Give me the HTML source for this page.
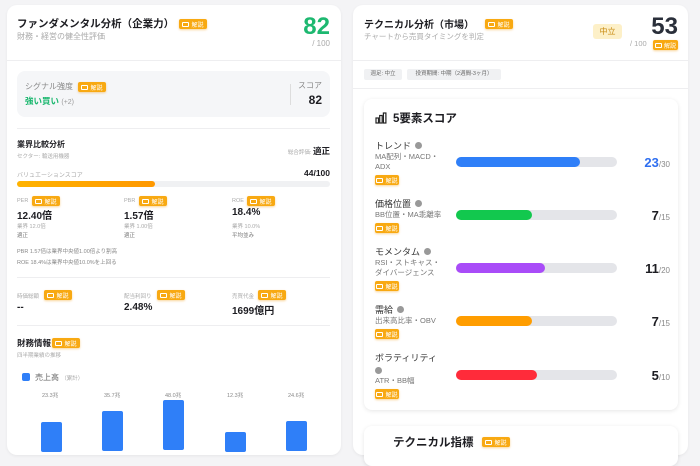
<!DOCTYPE html><html><head><meta charset="utf-8"><style>
*{margin:0;padding:0;box-sizing:border-box}
body{width:700px;height:441px;overflow:hidden;background:#f4f4f6;font-family:"Liberation Sans","Noto Sans CJK JP",sans-serif;color:#1d1d22;position:relative}
.a{position:absolute;white-space:nowrap}
.card{position:absolute;background:#fff;border-radius:10px;box-shadow:0 1px 3px rgba(0,0,0,.06)}
.b{position:absolute;background:#f8a912;color:#fff;font-size:6px;border-radius:2px;height:10px;width:28px;display:flex;align-items:center;justify-content:center;white-space:nowrap;box-shadow:0 1px 2px rgba(240,150,0,.4)}
.b:before{content:"";display:block;width:5px;height:3px;border:1px solid #fff;border-radius:1px;margin-right:2px;flex:none}
.hr{position:absolute;height:1px;background:#eeeef0}
.g{font-size:5.5px;color:#aaa}
.v{font-size:10px;font-weight:bold}
.track{position:absolute;left:456px;width:161px;height:10px;background:#e4e5e9;border-radius:5px}
.fill{height:10px;border-radius:5px}
.lab{font-size:9px;color:#333}
.sub{font-size:7.5px;color:#777;line-height:10px}
.sc{font-size:13px;font-weight:bold;text-align:right;right:30px}
.sc span{font-size:8px;font-weight:normal;color:#888}
.info{display:inline-block;width:7px;height:7px;border-radius:50%;background:#999;margin-left:4px;vertical-align:0}
</style></head><body>
<div class="card" style="left:7px;top:5px;width:334px;height:450px"></div>
<div class="a" style="left:17px;top:16px;font-size:10.5px;font-weight:bold">ファンダメンタル分析（企業力）</div>
<div class="b" style="left:179px;top:19px">解説</div>
<div class="a" style="left:17px;top:31px;font-size:8px;color:#aaa">財務・経営の健全性評価</div>
<div class="a" style="right:370px;top:13px;font-size:24px;font-weight:bold;color:#1db870">82</div>
<div class="a" style="right:370px;top:39px;font-size:8px;color:#aaa">/ 100</div>
<div class="hr" style="left:7px;width:334px;top:60px"></div>
<div class="a" style="left:17px;top:71px;width:313px;height:46px;background:#f5f6f8;border-radius:8px"></div>
<div class="a" style="left:25px;top:81px;font-size:8px;color:#888">シグナル強度</div>
<div class="b" style="left:78px;top:82px">解説</div>
<div class="a" style="left:25px;top:95px;font-size:8.5px;font-weight:bold;color:#1db870">強い買い <span style="font-weight:normal;color:#999;font-size:7px">(+2)</span></div>
<div class="a" style="left:290px;top:84px;width:1px;height:21px;background:#ddd"></div>
<div class="a" style="right:378px;top:80px;font-size:8px;color:#888">スコア</div>
<div class="a" style="right:378px;top:93px;font-size:12px;font-weight:bold">82</div>
<div class="hr" style="left:17px;width:313px;top:128px"></div>
<div class="a" style="left:17px;top:139px;font-size:8px;font-weight:bold">業界比較分析</div>
<div class="a g" style="left:17px;top:152px">セクター: 輸送用機器</div>
<div class="a" style="right:370px;top:145px;font-size:8.5px;font-weight:bold"><span class="g" style="font-weight:normal">総合評価: </span>適正</div>
<div class="a g" style="left:17px;top:170px;font-size:6px">バリュエーションスコア</div>
<div class="a" style="right:370px;top:168px;font-size:8.5px;font-weight:bold">44/100</div>
<div class="a" style="left:17px;top:181px;width:313px;height:6px;background:#f0f1f3;border-radius:3px"><div style="width:138px;height:6px;border-radius:3px;background:linear-gradient(90deg,#ffb300,#ff9800)"></div></div>
<div class="a g" style="left:17px;top:198px">PER</div><div class="b" style="left:32px;top:196px">解説</div>
<div class="a g" style="left:124px;top:198px">PBR</div><div class="b" style="left:139px;top:196px">解説</div>
<div class="a g" style="left:232px;top:198px">ROE</div><div class="b" style="left:247px;top:196px">解説</div>
<div class="a v" style="left:17px;top:207px">12.40倍</div>
<div class="a v" style="left:124px;top:207px">1.57倍</div>
<div class="a v" style="left:232px;top:207px">18.4%</div>
<div class="a g" style="left:17px;top:222px">業界 12.0倍</div><div class="a g" style="left:124px;top:222px">業界 1.00倍</div><div class="a g" style="left:232px;top:222px">業界 10.0%</div>
<div class="a g" style="left:17px;top:231px;color:#777">適正</div><div class="a g" style="left:124px;top:231px;color:#777">適正</div><div class="a g" style="left:232px;top:231px;color:#777">平均並み</div>
<div class="a g" style="left:17px;top:247px;color:#888">PBR 1.57倍は業界中央値1.00倍より割高</div>
<div class="a g" style="left:17px;top:258px;color:#888">ROE 18.4%は業界中央値10.0%を上回る</div>
<div class="hr" style="left:17px;width:313px;top:277px"></div>
<div class="a g" style="left:17px;top:292px">時価総額</div><div class="b" style="left:44px;top:290px">解説</div>
<div class="a g" style="left:124px;top:292px">配当利回り</div><div class="b" style="left:157px;top:290px">解説</div>
<div class="a g" style="left:232px;top:292px">売買代金</div><div class="b" style="left:258px;top:290px">解説</div>
<div class="a v" style="left:17px;top:302px">--</div><div class="a v" style="left:124px;top:302px">2.48%</div><div class="a v" style="left:232px;top:302px">1699億円</div>
<div class="hr" style="left:17px;width:313px;top:325px"></div>
<div class="a" style="left:17px;top:337px;font-size:8.5px;font-weight:bold">財務情報</div><div class="b" style="left:52px;top:338px">解説</div>
<div class="a g" style="left:17px;top:351px">四半期業績の推移</div>
<div class="a" style="left:22px;top:373px;width:8px;height:8px;border-radius:2px;background:#2f7ff8"></div>
<div class="a" style="left:35px;top:372px;font-size:8px;color:#666">売上高 <span style="font-size:5.5px;color:#aaa">（累計）</span></div>
<div class="a g" style="left:42px;top:391px;color:#888">23.3兆</div><div class="a" style="left:41px;top:422px;width:21px;height:30px;background:#2f7ff8;border-radius:2px"></div>
<div class="a g" style="left:104px;top:391px;color:#888">35.7兆</div><div class="a" style="left:102px;top:411px;width:21px;height:40px;background:#2f7ff8;border-radius:2px"></div>
<div class="a g" style="left:165px;top:391px;color:#888">48.0兆</div><div class="a" style="left:163px;top:400px;width:21px;height:50px;background:#2f7ff8;border-radius:2px"></div>
<div class="a g" style="left:227px;top:391px;color:#888">12.3兆</div><div class="a" style="left:225px;top:432px;width:21px;height:20px;background:#2f7ff8;border-radius:2px"></div>
<div class="a g" style="left:288px;top:391px;color:#888">24.6兆</div><div class="a" style="left:286px;top:421px;width:21px;height:30px;background:#2f7ff8;border-radius:2px"></div>

<div class="card" style="left:353px;top:5px;width:335px;height:450px"></div>
<div class="a" style="left:364px;top:16px;font-size:10px;font-weight:bold">テクニカル分析（市場）</div>
<div class="b" style="left:485px;top:19px">解説</div>
<div class="a" style="left:364px;top:31px;font-size:7.5px;color:#aaa">チャートから売買タイミングを判定</div>
<div class="a" style="left:593px;top:24px;width:29px;height:15px;background:#fdf0c8;color:#c88a10;font-size:8px;line-height:15px;text-align:center;border-radius:3px">中立</div>
<div class="a" style="right:22px;top:13px;font-size:24px;font-weight:bold;color:#2a2f3a">53</div>
<div class="a" style="left:630px;top:39px;font-size:7.5px;color:#aaa">/ 100</div>
<div class="b" style="left:653px;top:40px;width:25px">解説</div>
<div class="hr" style="left:353px;width:335px;top:60px"></div>
<div class="a" style="left:364px;top:69px;width:38px;height:11px;background:#f0f1f3;border-radius:2px;font-size:5.5px;color:#666;line-height:11px;text-align:center">週足: 中立</div>
<div class="a" style="left:407px;top:69px;width:94px;height:11px;background:#f0f1f3;border-radius:2px;font-size:5.5px;color:#666;line-height:11px;text-align:center">投資期間: 中期（2週間-3ヶ月）</div>
<div class="hr" style="left:353px;width:335px;top:88px"></div>
<div class="a" style="left:364px;top:99px;width:314px;height:311px;border-radius:8px;background:#fff;box-shadow:0 1px 4px rgba(0,0,0,.1)"></div>
<svg class="a" style="left:375px;top:112px" width="12" height="12" viewBox="0 0 12 12" fill="none" stroke="#222" stroke-width="1.2"><rect x="1" y="6" width="2.5" height="5"/><rect x="4.7" y="3.5" width="2.5" height="7.5"/><rect x="8.4" y="1" width="2.5" height="10"/></svg>
<div class="a" style="left:393px;top:110px;font-size:11.5px;font-weight:bold">5要素スコア</div>

<div class="a lab" style="left:375px;top:139px">トレンド<span class="info"></span></div>
<div class="a sub" style="left:375px;top:152px">MA配列・MACD・<br>ADX</div>
<div class="b" style="left:375px;top:175px;width:24px">解説</div>
<div class="track" style="top:157px"><div class="fill" style="width:124px;background:#2f7ff8"></div></div>
<div class="a sc" style="top:155px;color:#2f6ff0">23<span>/30</span></div>

<div class="a lab" style="left:375px;top:197px">価格位置<span class="info"></span></div>
<div class="a sub" style="left:375px;top:210px">BB位置・MA乖離率</div>
<div class="b" style="left:375px;top:223px;width:24px">解説</div>
<div class="track" style="top:210px"><div class="fill" style="width:76px;background:#12c84e"></div></div>
<div class="a sc" style="top:208px">7<span>/15</span></div>

<div class="a lab" style="left:375px;top:245px">モメンタム<span class="info"></span></div>
<div class="a sub" style="left:375px;top:258px">RSI・ストキャス・<br>ダイバージェンス</div>
<div class="b" style="left:375px;top:281px;width:24px">解説</div>
<div class="track" style="top:263px"><div class="fill" style="width:89px;background:#a94cf8"></div></div>
<div class="a sc" style="top:261px">11<span>/20</span></div>

<div class="a lab" style="left:375px;top:303px">需給<span class="info"></span></div>
<div class="a sub" style="left:375px;top:316px">出来高比率・OBV</div>
<div class="b" style="left:375px;top:329px;width:24px">解説</div>
<div class="track" style="top:316px"><div class="fill" style="width:76px;background:#ff9d00"></div></div>
<div class="a sc" style="top:314px">7<span>/15</span></div>

<div class="a lab" style="left:375px;top:351px">ボラティリティ</div>
<div class="a" style="left:375px;top:367px;width:7px;height:7px;border-radius:50%;background:#999"></div>
<div class="a sub" style="left:375px;top:376px">ATR・BB幅</div>
<div class="b" style="left:375px;top:389px;width:24px">解説</div>
<div class="track" style="top:370px"><div class="fill" style="width:81px;background:#ff2b3a"></div></div>
<div class="a sc" style="top:368px">5<span>/10</span></div>

<div class="a" style="left:364px;top:426px;width:314px;height:40px;border-radius:8px;background:#fff;box-shadow:0 1px 4px rgba(0,0,0,.1)"></div>
<div class="a" style="left:393px;top:434px;font-size:11.5px;font-weight:bold">テクニカル指標</div>
<div class="b" style="left:482px;top:437px">解説</div>
</body></html>
